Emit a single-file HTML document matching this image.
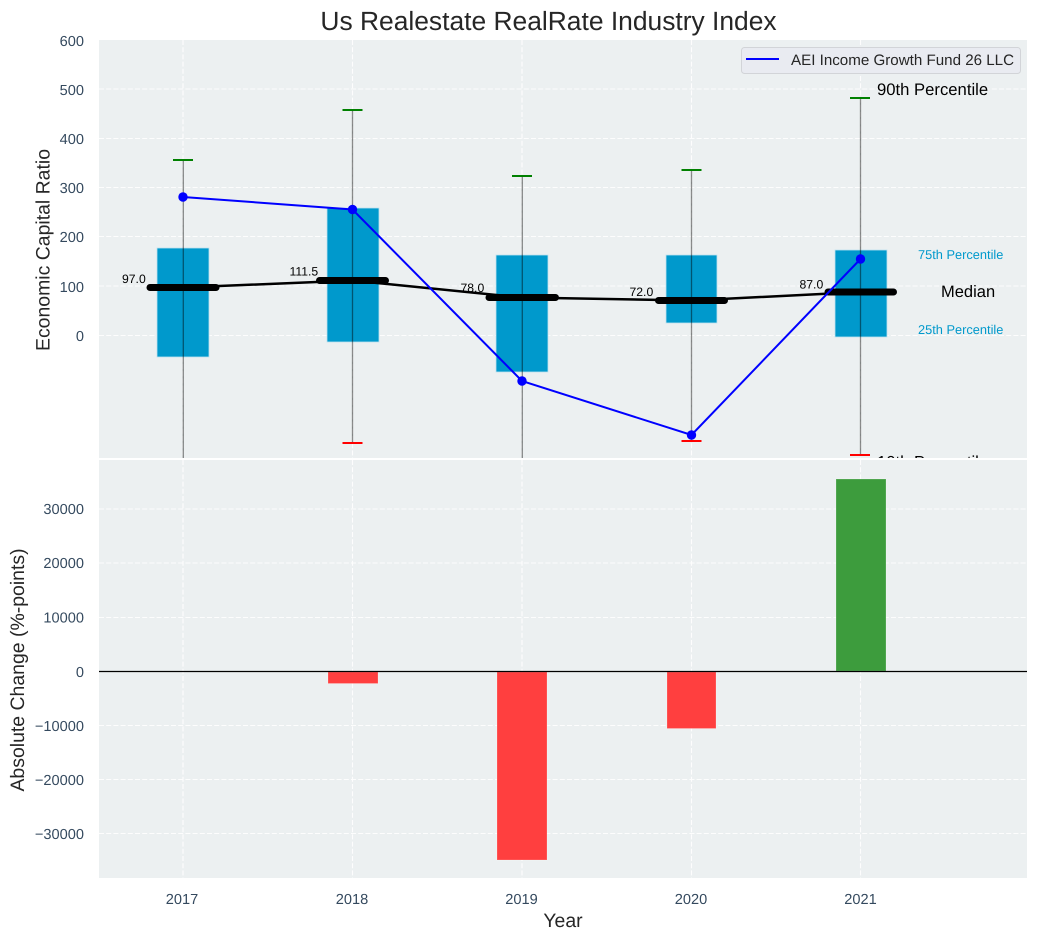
<!DOCTYPE html>
<html><head><meta charset="utf-8">
<style>
html,body{margin:0;padding:0;background:#fff;width:1038px;height:940px;overflow:hidden}
svg{display:block}
text{font-family:"Liberation Sans",Arial,sans-serif;text-rendering:geometricPrecision}
.t{fill:#34495e;font-size:14.6px}
.l{fill:#262626;font-size:19.44px}
.v{fill:#000;font-size:12.2px}
.g{stroke:#fff;stroke-width:1.1;stroke-dasharray:5 2.2;opacity:.9}
.w{stroke:#000;stroke-opacity:.45;stroke-width:1.3}
.m{stroke:#000;stroke-width:7;stroke-linecap:round}
.b{fill:#0099cc;stroke:#bfe3ef;stroke-width:.8}
</style></head><body>
<svg width="1038" height="940" viewBox="0 0 1038 940" xmlns="http://www.w3.org/2000/svg">
<defs><clipPath id="c1"><rect x="99" y="40" width="928" height="418"/></clipPath></defs>
<text x="548.500" y="30" text-anchor="middle" font-size="26.400" fill="#262626">Us Realestate RealRate Industry Index</text>

<rect x="99" y="40" width="928" height="418" fill="#ecf0f1"/>
<rect x="99" y="460" width="928" height="418" fill="#ecf0f1"/>

<g class="g">
<path d="M99 89H1027M99 138.500H1027M99 187.500H1027M99 236.500H1027M99 286H1027M99 335.500H1027"/>
<path d="M183 40V458M352.500 40V458M522 40V458M691.500 40V458M860.500 40V458"/>
<path d="M99 509H1027M99 563H1027M99 617.500H1027M99 725.500H1027M99 779.500H1027M99 833.500H1027"/>
<path d="M183 460V878M352.500 460V878M522 460V878M691.500 460V878M860.500 460V878"/>
</g>

<g clip-path="url(#c1)">
<rect class="b" x="157" y="248" width="52" height="109"/>
<rect class="b" x="327" y="208" width="52" height="134"/>
<rect class="b" x="496" y="255" width="52" height="117"/>
<rect class="b" x="666" y="255" width="51" height="68"/>
<rect class="b" x="835" y="250" width="52" height="87"/>

<path class="w" d="M183.300 160V458M352.500 110V443M522.300 176V458M691.500 170V441M860.500 98V455" fill="none"/>

<path stroke="#008000" stroke-width="2" fill="none" d="M173 160H193M342.500 110H362.500M512 176H532M681.500 170H701.500M850 98H870"/>
<path stroke="#ff0000" stroke-width="2" fill="none" d="M342.500 443H362.500M681.500 441H701.500M850 455H870"/>

<polyline points="183,287.500 352.500,280.500 522,297.500 691.500,300.500 860.500,292" fill="none" stroke="#000" stroke-width="2.500"/>
<path class="m" d="M150 287.500H216M319.500 280.500H385.500M489 297.500H555.500M658.500 300.500H724.500M828 292H893.500"/>

<polyline points="183,197 352.500,209.500 522,381 691.500,435 860.500,259" fill="none" stroke="#0000ff" stroke-width="2"/>
<g fill="#0000ff">
<circle cx="183" cy="197" r="4.700"/><circle cx="352.500" cy="209.500" r="4.700"/><circle cx="522" cy="381" r="4.700"/><circle cx="691.500" cy="435" r="4.700"/><circle cx="860.500" cy="259" r="4.700"/>
</g>

<text class="v" x="122" y="283">97.0</text>
<text class="v" x="289.500" y="275.500">111.5</text>
<text class="v" x="460.500" y="292">78.0</text>
<text class="v" x="629.500" y="296">72.0</text>
<text class="v" x="799.500" y="288.500">87.0</text>

<text x="877" y="95" font-size="16.670" fill="#000">90th Percentile</text>
<text x="918" y="259" font-size="12.800" fill="#0099cc">75th Percentile</text>
<text x="941" y="297" font-size="16.500" fill="#000">Median</text>
<text x="918" y="334" font-size="12.800" fill="#0099cc">25th Percentile</text>
<text x="877" y="467.500" font-size="16.670" fill="#000">10th Percentile</text>

<rect x="741.500" y="47.500" width="279" height="26" rx="3" fill="#e9ebf1" stroke="#d2d4d8" stroke-width="1"/>
<path d="M746 59H779" stroke="#0000ff" stroke-width="2"/>
<text x="791" y="65" font-size="15.150" fill="#262626">AEI Income Growth Fund 26 LLC</text>
</g>

<g stroke="#fff" stroke-opacity=".25" stroke-width=".8">
<rect x="328" y="672" width="50" height="11.500" fill="#ff3f3f"/>
<rect x="497" y="672" width="50" height="188" fill="#ff3f3f"/>
<rect x="667" y="672" width="49" height="56.500" fill="#ff3f3f"/>
<rect x="836" y="479" width="50" height="192" fill="#3d9c3d"/>
</g>
<path d="M99 671.500H1027" stroke="#000" stroke-width="1.200"/>

<g class="t" text-anchor="end">
<text x="84" y="46">600</text><text x="84" y="95">500</text><text x="84" y="144">400</text><text x="84" y="193">300</text><text x="84" y="242">200</text><text x="84" y="292">100</text><text x="84" y="341">0</text>
<text x="84" y="514">30000</text><text x="84" y="568">20000</text><text x="84" y="622.500">10000</text><text x="84" y="677">0</text><text x="84" y="731">−10000</text><text x="84" y="785">−20000</text><text x="84" y="839">−30000</text>
</g>
<g class="t" text-anchor="middle">
<text x="182" y="904">2017</text><text x="352" y="904">2018</text><text x="521.500" y="904">2019</text><text x="691" y="904">2020</text><text x="860.500" y="904">2021</text>
</g>

<text class="l" x="563" y="927" text-anchor="middle">Year</text>
<text class="l" transform="translate(49.500 250) rotate(-90)" text-anchor="middle">Economic Capital Ratio</text>
<text class="l" transform="translate(24 670) rotate(-90)" text-anchor="middle">Absolute Change (%-points)</text>
</svg>
</body></html>
